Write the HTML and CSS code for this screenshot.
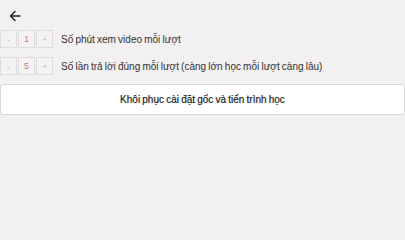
FILE: index.html
```html
<!DOCTYPE html>
<html lang="vi">
<head>
<meta charset="utf-8">
<link rel="stylesheet" href="styles.css">
</head>
<body>
<div class="page">
  <div class="topbar">
    <svg class="back" width="12" height="12" viewBox="0 0 12 12"><path d="M11 6H1.5M6 1.5L1.5 6L6 10.5" fill="none" stroke="#222" stroke-width="1.4" stroke-linecap="round" stroke-linejoin="round"/></svg>
  </div>
  <div class="setting">
    <div class="stepper">
      <span class="btn">-</span><span class="val">1</span><span class="btn">+</span>
    </div>
    <span class="label">Số phút xem video mỗi lượt</span>
  </div>
  <div class="setting">
    <div class="stepper">
      <span class="btn">-</span><span class="val">5</span><span class="btn">+</span>
    </div>
    <span class="label">Số lần trả lời đúng mỗi lượt (càng lớn học mỗi lượt càng lâu)</span>
  </div>
  <div class="reset">Khôi phục cài đặt gốc và tiến trình học</div>
</div>
</body>
</html>
```
FILE: styles.css
```css
html, body {
  margin: 0;
  padding: 0;
  background: #f2f0f0;
  font-family: "Liberation Sans", Arial, sans-serif;
  color: #333;
}
.page {
  display: flex;
  flex-direction: column;
  width: 405px;
}
.topbar {
  height: 30px;
  display: flex;
  align-items: center;
  padding-left: 9px;
  padding-top: 2px;
  box-sizing: border-box;
}
.back { display: block; }
.setting {
  display: flex;
  align-items: center;
  height: 18px;
  margin-bottom: 9px;
}
.stepper {
  display: flex;
  gap: 1px;
  margin-right: 8px;
}
.btn, .val {
  width: 17px;
  height: 18px;
  box-sizing: border-box;
  border: 1px solid #dedcdc;
  background: #f4f3f3;
  display: flex;
  align-items: center;
  justify-content: center;
  font-size: 8px;
  color: #bbb;
}
.val {
  color: #d07a7a;
  font-size: 9px;
}
.label {
  font-size: 10px;
  color: #333;
  white-space: nowrap;
  word-spacing: -0.6px;
}
.reset {
  height: 31px;
  box-sizing: border-box;
  background: #fff;
  border: 1px solid #d8d6d6;
  border-radius: 3px;
  display: flex;
  align-items: center;
  justify-content: center;
  font-size: 10px;
  font-weight: 500;
  color: #222;
  word-spacing: -0.6px;
  -webkit-text-stroke: 0.2px #222;
}
```
